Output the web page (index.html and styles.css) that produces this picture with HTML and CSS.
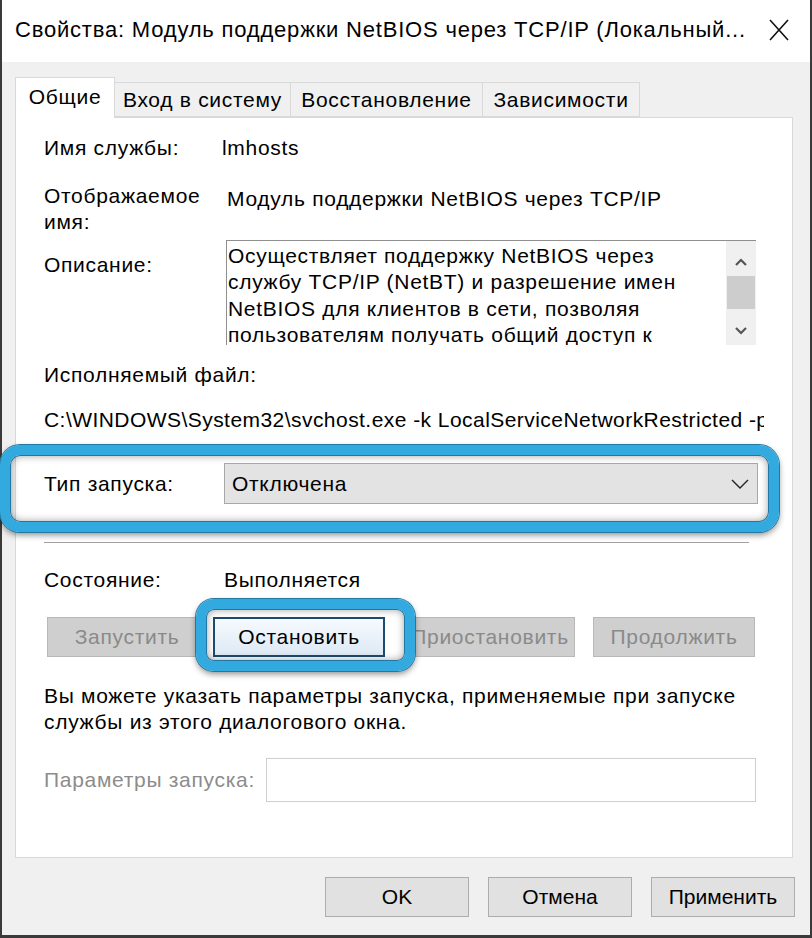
FILE: index.html
```html
<!DOCTYPE html>
<html lang="ru">
<head>
<meta charset="utf-8">
<title>Свойства</title>
<link rel="stylesheet" href="styles.css">
</head>
<body>
<div class="window">
  <div class="titlebar">
    <span class="title">Свойства: Модуль поддержки NetBIOS через TCP/IP (Локальный...</span>
    <svg class="close" width="22" height="24" viewBox="0 0 22 24"><path d="M2 2 L20 22 M20 2 L2 22" stroke="#111" stroke-width="1.6" fill="none"/></svg>
  </div>
  <div class="body">
    <div class="tabs">
      <div class="tab active">Общие</div>
      <div class="tab t2">Вход в систему</div>
      <div class="tab t3">Восстановление</div>
      <div class="tab t4">Зависимости</div>
    </div>
    <div class="panel">
      <div class="row r1">
        <div class="label">Имя службы:</div>
        <div class="value v-name">lmhosts</div>
      </div>
      <div class="row r2">
        <div class="label">Отображаемое<br>имя:</div>
        <div class="value v-disp">Модуль поддержки NetBIOS через TCP/IP</div>
      </div>
      <div class="row r3">
        <div class="label l-desc">Описание:</div>
        <div class="descbox">
          <div class="desctext">Осуществляет поддержку NetBIOS через службу TCP/IP (NetBT) и разрешение имен NetBIOS для клиентов в сети, позволяя пользователям получать общий доступ к файлам, принтерам</div>
          <div class="scroll">
            <svg class="arr" width="14" height="10" viewBox="0 0 14 10"><path d="M2 8 L7 3 L12 8" stroke="#555" stroke-width="2.2" fill="none"/></svg>
            <div class="thumb"></div>
            <div class="track"></div>
            <svg class="arr" width="14" height="10" viewBox="0 0 14 10"><path d="M2 2 L7 7 L12 2" stroke="#555" stroke-width="2.2" fill="none"/></svg>
          </div>
        </div>
      </div>
      <div class="exe-label">Исполняемый файл:</div>
      <div class="exe-path">C:\WINDOWS\System32\svchost.exe -k LocalServiceNetworkRestricted -p</div>
      <div class="row r-start">
        <div class="label">Тип запуска:</div>
        <div class="select">
          <span>Отключена</span>
          <svg width="18" height="10" viewBox="0 0 18 10"><path d="M1 1 L9 9 L17 1" stroke="#222" stroke-width="1.4" fill="none"/></svg>
        </div>
      </div>
      <div class="sep"></div>
      <div class="row r-state">
        <div class="label">Состояние:</div>
        <div class="value">Выполняется</div>
      </div>
      <div class="btnrow">
        <div class="btn disabled b1">Запустить</div>
        <div class="btn stop b2">Остановить</div>
        <div class="btn disabled b3">Приостановить</div>
        <div class="btn disabled b4">Продолжить</div>
      </div>
      <div class="help">Вы можете указать параметры запуска, применяемые при запуске<br>службы из этого диалогового окна.</div>
      <div class="row r-params">
        <div class="label dim">Параметры запуска:</div>
        <div class="input"></div>
      </div>
    </div>
    <div class="footer">
      <div class="fbtn">OK</div>
      <div class="fbtn">Отмена</div>
      <div class="fbtn">Применить</div>
    </div>
  </div>
  <div class="mark mark-start"></div>
  <div class="mark mark-stop"></div>
</div>
</body>
</html>
```

FILE: styles.css
```css
* { box-sizing: border-box; }
html, body { margin: 0; padding: 0; }
body {
  width: 812px;
  height: 938px;
  overflow: hidden;
  font-family: "Liberation Sans", Arial, sans-serif;
  font-size: 21px;
  letter-spacing: 0.7px;
  color: #000;
  background: #f0f0f0;
}
.window {
  position: relative;
  width: 812px;
  height: 938px;
  background: #f0f0f0;
  border-left: 2px solid #3a3a3a;
  border-right: 2px solid #3a3a3a;
  border-bottom: 3px solid #3a3a3a;
}
.titlebar {
  height: 62px;
  background: #fff;
  display: flex;
  align-items: center;
  justify-content: space-between;
  padding: 0 20px 2px 13px;
}
.title {
  font-size: 22px;
  letter-spacing: 0.8px;
  white-space: nowrap;
}
.close { display: block; }
.body {
  padding: 15px 15px 0 13px;
}
.tabs {
  display: flex;
  align-items: flex-start;
  height: 41px;
  position: relative;
  z-index: 2;
}
.tab {
  text-align: center;
  border: 1px solid #d9d9d9;
  background: #f0f0f0;
  height: 35px;
  margin-top: 5px;
  line-height: 33px;
  border-left: none;
  border-bottom: none;
  white-space: nowrap;
}
.tab.active {
  width: 100px;
  height: 41px;
  margin-top: 0;
  background: #fff;
  border-left: 1px solid #d9d9d9;
  line-height: 38px;
}
.t2 { width: 176px; border-bottom: 1px solid #d9d9d9; }
.t3 { width: 192px; border-bottom: 1px solid #d9d9d9; }
.t4 { width: 157px; border-bottom: 1px solid #d9d9d9; }
.panel {
  margin-top: -1px;
  width: 778px;
  height: 741px;
  background: #fff;
  border: 1px solid #d9d9d9;
  padding: 17px 35px 0 28px;
  line-height: 26px;
}
.row {
  display: grid;
  grid-template-columns: 180px 1fr;
}
.label { white-space: nowrap; }
.dim { color: #8c8c8c; }
.v-name { margin-left: -2px; }
.r2 { margin-top: 22px; }
.v-disp { padding-top: 3px; margin-left: 3px; white-space: nowrap; }
.r3 { margin-top: 5px; }
.l-desc { padding-top: 12px; }
.descbox {
  height: 105px;
  margin-left: 2px;
  border-top: 1px solid #8f8f8f;
  border-left: 1px solid #8f8f8f;
  display: flex;
  overflow: hidden;
  width: 530px;
}
.desctext {
  flex: 1;
  padding: 2px 8px 0 1px;
  line-height: 26.3px;
  height: 104px;
  overflow: hidden;
}
.scroll {
  width: 30px;
  flex: none;
  background: #f0f0f0;
  display: flex;
  flex-direction: column;
  align-items: center;
}
.arr { display: block; margin-top: 16px; }
.scroll .arr:last-child { margin-top: 9px; }
.thumb {
  width: 28px;
  height: 33px;
  background: #cdcdcd;
  margin-top: 9px;
}
.track { height: 8px; }
.exe-label { margin-top: 17px; }
.exe-path {
  margin-top: 19px;
  width: 720px;
  white-space: nowrap;
  overflow: hidden;
  letter-spacing: 0.45px;
}
.r-start { margin-top: 30px; align-items: center; }
.select {
  height: 41px;
  background: #e3e3e3;
  border: 1px solid #a8a8a8;
  display: flex;
  align-items: center;
  justify-content: space-between;
  padding: 0 8px 0 7px;
  width: 534px;
}
.select svg { display: block; }
.sep {
  margin-top: 38px;
  width: 705px;
  border-top: 1px solid #a0a0a0;
  height: 1px;
}
.r-state { margin-top: 24px; }
.btnrow {
  margin-top: 24px;
  display: flex;
  height: 40px;
  margin-left: 3px;
}
.btn {
  height: 40px;
  display: flex;
  align-items: center;
  justify-content: center;
  border: 1px solid #b8b8b8;
  white-space: nowrap;
}
.btn.disabled { background: #cfcfcf; color: #8a8a8a; }
.b1 { width: 160px; }
.b2 { width: 172px; margin-left: 6px; }
.b3 { width: 170px; margin-left: 20px; }
.b4 { width: 162px; margin-left: 18px; }
.btn.stop {
  background: linear-gradient(#f6fafd, #dde9f5);
  border: 2px solid #1f4a70;
}
.help { margin-top: 26px; white-space: nowrap; }
.r-params { margin-top: 23px; align-items: center; grid-template-columns: 222px 1fr; }
.input {
  height: 44px;
  width: 490px;
  background: #fff;
  border: 1px solid #cfcfcf;
}
.footer {
  display: flex;
  justify-content: flex-end;
  gap: 19px;
  margin-top: 19px;
  letter-spacing: 0;
}
.fbtn {
  width: 144px;
  height: 40px;
  background: #e1e1e1;
  border: 1px solid #adadad;
  display: flex;
  align-items: center;
  justify-content: center;
  font-size: 21px;
}
.mark {
  position: absolute;
  border: 10px solid #32aae0;
  border-radius: 20px;
  box-shadow: 0 0 0 1px #2178a3, 0 3px 6px rgba(0,0,0,0.45), inset 0 0 0 1px #2178a3, inset 0 0 9px rgba(0,0,0,0.45);
  z-index: 5;
  pointer-events: none;
}
.mark-start {
  left: -2px;
  top: 445px;
  width: 779px;
  height: 87px;
}
.mark-stop {
  left: 194px;
  top: 599px;
  width: 219px;
  height: 72px;
  border-radius: 18px;
}
```
